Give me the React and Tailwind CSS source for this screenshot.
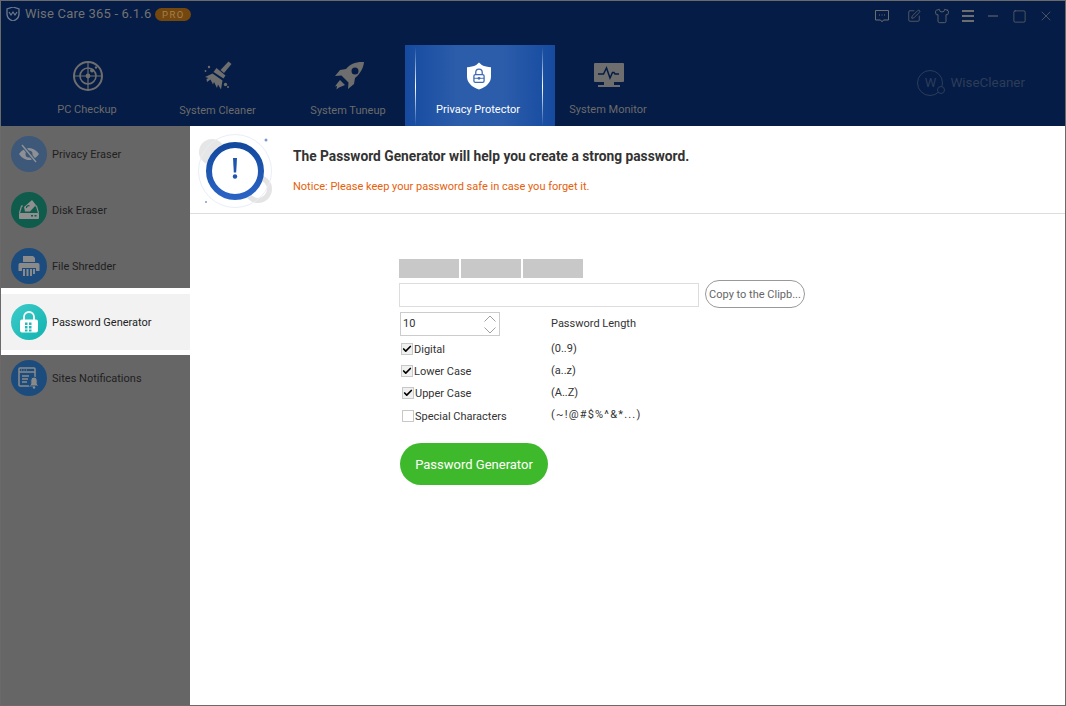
import { SquarePen, Shirt, Minus, Square, X, Check } from 'lucide-react';

const font = "font-['Roboto','Liberation_Sans',sans-serif]";

function RadarIcon() {
  return (
    <svg width="32" height="32" viewBox="0 0 32 32" fill="none" stroke="#6e6e6e">
      <circle cx="16" cy="16" r="14" strokeWidth="2" />
      <circle cx="16" cy="16" r="8" strokeWidth="1.6" />
      <path d="M16 2v28M2 16h28" strokeWidth="1.2" />
      <circle cx="16" cy="16" r="2.4" fill="#6e6e6e" stroke="none" />
      <circle cx="20" cy="10.5" r="2" fill="#6e6e6e" stroke="none" />
      <circle cx="24" cy="7.5" r="1.2" fill="#6e6e6e" stroke="none" />
    </svg>
  );
}

function BroomIcon() {
  return (
    <svg width="32" height="32" viewBox="0 0 32 32" fill="#6e6e6e">
      <path d="M26.5 1.5l3 2.5-7.5 9-3.5-3z" />
      <path d="M14.5 8l9 7.500-2 3-10-6.500z" />
      <path d="M10.500 13.500l10 7-1.500 9-3-5-1 3.500-3-6-1 2.500-2.500-5-3.500 2.500-.5-3 2-1-3.500-1z" />
      <circle cx="23.500" cy="24.500" r="1.700" />
      <circle cx="26" cy="27" r="1" />
      <circle cx="7" cy="7" r="1.200" />
      <circle cx="3.500" cy="11" r="0.900" />
    </svg>
  );
}

function RocketIcon() {
  return (
    <svg width="32" height="32" viewBox="0 0 32 32">
      <path fill="#6e6e6e" fillRule="evenodd" d="M30 2c-8-.500-14 2-18 7l-6 1-5 6 6.500-.500 3.500 3.500 3.500 3.500-.5 6.500 6-5 1-6c5-4 8.500-10 9-16zM21 7.500a3.500 3.500 0 1 1 0 7 3.500 3.500 0 0 1 0-7z" />
      <path fill="#6e6e6e" d="M6 20l5 5-6 2.500-2.500 2 .5-3.500-2 .5 2.500-3.500z" />
    </svg>
  );
}

function ShieldIcon() {
  return (
    <svg width="24" height="28" viewBox="0 0 26 29">
      <path fill="#fff" d="M13 0l3 2.500c3 1.500 6.500 2.300 10 2.500v10c0 6.500-5 11.500-13 14C5 26.500 0 21.500 0 15V5c3.500-.2 7-1 10-2.500z" />
      <rect x="7.500" y="13" width="11" height="8.500" rx="1.500" fill="none" stroke="#3f6ab5" strokeWidth="1.400" />
      <path d="M9.500 13v-2.500a3.500 3.500 0 0 1 7 0V13" fill="none" stroke="#3f6ab5" strokeWidth="1.400" />
      <path d="M7.500 17h11" stroke="#3f6ab5" strokeWidth="1" />
      <circle cx="13" cy="17" r="1.500" fill="#3f6ab5" />
    </svg>
  );
}

function MonitorIcon() {
  return (
    <svg width="30" height="26" viewBox="0 0 30 26">
      <rect x="0" y="0" width="30" height="19" rx="1" fill="#6e6e6e" />
      <rect x="10" y="19" width="10" height="3" fill="#6e6e6e" />
      <rect x="4" y="22" width="22" height="2" fill="#6e6e6e" />
      <path d="M4 11h5.500l3-6 3.500 10 2.500-5.500h1.500l1 1.500h4" fill="none" stroke="#051c46" strokeWidth="1.500" />
    </svg>
  );
}

function NavItem({ icon, label, className, iconClass, textClass }) {
  return (
    <div className={`flex flex-col items-center h-[81px] ${className}`}>
      <div className={`h-[32px] mt-[15px] flex items-center justify-center ${iconClass || ''}`}>{icon}</div>
      <span className={`mt-[10px] leading-[16px] text-[#6b6b6b] ${textClass || ''}`}>{label}</span>
    </div>
  );
}

function EyeOff() {
  return (
    <svg width="22" height="20" viewBox="0 0 22 20">
      <path fill="#8d9095" fillRule="evenodd" d="M11 4c4 0 7.500 2.500 10 6-2.500 3.500-6 6-10 6S3.500 13.500 1 10c2.500-3.500 6-6 10-6zM11 6.500a3.500 3.500 0 1 0 0 7 3.500 3.500 0 0 0 0-7z" />
      <path d="M4 1l14 17" stroke="#3d5878" strokeWidth="3.500" />
      <path d="M4 1l14 17" stroke="#8d9095" strokeWidth="1.500" />
    </svg>
  );
}

function DiskIcon() {
  return (
    <svg width="22" height="22" viewBox="0 0 22 22">
      <path fill="none" stroke="#8f8f8f" strokeWidth="1.200" d="M5 7H3.500L1.500 14M17 7h1.500l2 7" />
      <rect x="1" y="14" width="20" height="6" rx="1" fill="#8f8f8f" />
      <rect x="13" y="16" width="2" height="1.500" fill="#0f5c4c" />
      <rect x="16.500" y="16" width="2" height="1.500" fill="#0f5c4c" />
      <path d="M6 8l8-7 4 5-6 6.500H7z" fill="#8f8f8f" />
      <path d="M8.500 9a2 2 0 0 1 3-2" fill="none" stroke="#0f5c4c" strokeWidth="1.200" />
    </svg>
  );
}

function PrinterIcon() {
  return (
    <svg width="22" height="22" viewBox="0 0 22 22" fill="#8a8a8a">
      <path d="M5 1h10l2 2v4H5z" />
      <path d="M2 8h18a1.500 1.500 0 0 1 1.500 1.500V16H18v-3H4v3H.5V9.500A1.500 1.500 0 0 1 2 8z" />
      <rect x="5" y="14" width="2" height="7" />
      <rect x="8.500" y="14" width="2" height="7" />
      <rect x="12" y="14" width="2" height="7" />
      <rect x="15" y="14" width="2" height="5" />
    </svg>
  );
}

function LockIcon() {
  return (
    <svg width="20" height="22" viewBox="0 0 20 22">
      <path d="M5 9V6a5 5 0 0 1 10 0v3" fill="none" stroke="#fff" strokeWidth="1.800" />
      <rect x="1" y="8.500" width="18" height="13" rx="2" fill="#fff" />
      <g fill="#1fb9b7">
        <rect x="6" y="11.500" width="2.500" height="2.500" />
        <rect x="10" y="11.500" width="2.500" height="2.500" />
        <rect x="6" y="15" width="2.500" height="2.500" />
        <rect x="10" y="15" width="2.500" height="2.500" />
        <rect x="6" y="18.500" width="2.500" height="2" />
        <rect x="10" y="18.500" width="2.500" height="2" />
      </g>
    </svg>
  );
}

function SiteIcon() {
  return (
    <svg width="22" height="22" viewBox="0 0 22 22">
      <rect x="1" y="1" width="16" height="18" rx="1" fill="none" stroke="#8a8a8a" strokeWidth="1.500" />
      <path d="M1 5h16" stroke="#8a8a8a" strokeWidth="1.500" />
      <path d="M3 3h1M5.500 3h1M8 3h1" stroke="#8a8a8a" />
      <path d="M4 9h7M4 12h6M4 15h5" stroke="#8a8a8a" strokeWidth="1.300" />
      <path d="M16 10a3.200 3.200 0 0 1 3.200 3.200V17l1.800 2H11l1.800-2v-3.800A3.200 3.200 0 0 1 16 10z" fill="#8a8a8a" stroke="#1c4c7e" />
      <circle cx="16" cy="20.500" r="1.200" fill="#8a8a8a" />
    </svg>
  );
}

function SideItem({ icon, label, circle, active }) {
  return (
    <div className={`flex items-center pl-[10px] ${active ? 'relative h-[67px] -mt-[6px] -mb-[5px] border-t-[6px] border-b-[5px] border-white bg-[#f2f2f2] text-[#222222]' : 'h-[56px] text-[#1f1f1f]'}`}>
      <div className={`w-[36px] h-[36px] rounded-full flex items-center justify-center ${circle}`}>{icon}</div>
      <span className="ml-[5px] mt-[3px]">{label}</span>
    </div>
  );
}

function NoticeArt() {
  return (
    <svg width="80" height="80" viewBox="0 0 80 80">
      <defs>
        <linearGradient id="ring" x1="0" y1="0" x2="0" y2="1">
          <stop offset="0" stopColor="#134a9e" />
          <stop offset="1" stopColor="#2a63c4" />
        </linearGradient>
      </defs>
      <circle cx="16" cy="22" r="13" fill="#e6e6e6" />
      <circle cx="62" cy="59" r="11.500" fill="#fff" stroke="#e4e4e4" strokeWidth="5" />
      <circle cx="39" cy="41" r="36.500" fill="none" stroke="#e8eef8" />
      <circle cx="39" cy="41" r="26" fill="#fff" stroke="url(#ring)" strokeWidth="6" />
      <path d="M37 28h4l-.8 14.500h-2.400z" fill="#1f55ac" />
      <circle cx="39" cy="46.500" r="2.200" fill="#1f55ac" />
      <circle cx="70" cy="10" r="1.500" fill="#7d9ad0" />
      <circle cx="10" cy="72" r="1" fill="#7d9ad0" />
    </svg>
  );
}

function CheckBox({ checked }) {
  return (
    <span className={`w-[12px] h-[12px] border border-[#c8c8c8] flex items-center justify-center shrink-0 ${checked ? 'bg-[#f0f0f0]' : 'bg-white'}`}>
      {checked && <Check size={12} strokeWidth={4} className="text-black" />}
    </span>
  );
}

function OptionRow({ label, range, checked, className, boxClass, rangeClass }) {
  return (
    <div className={`grid grid-cols-[152px_1fr] items-center h-[22px] ${className || ''}`}>
      <div className={`flex items-center ${boxClass || 'pl-[2px]'}`}>
        <CheckBox checked={checked} />
        <span className="ml-px mt-[3px] text-[#333333]">{label}</span>
      </div>
      <span className={`text-[#333333] ${rangeClass || ''}`}>{range}</span>
    </div>
  );
}

export default function App() {
  return (
    <div className={`${font} w-[1066px] h-[706px] flex flex-col overflow-hidden border border-[#6a6a6a] bg-white text-[11px]`}>
      <header className="h-[125px] bg-[#051c46] shrink-0 flex flex-col">
        <div className="h-[44px] flex items-start">
          <div className="flex items-center h-[26px] pl-[5px]">
            <svg width="14" height="14" viewBox="0 0 14 14">
              <path d="M7 0l6 2v5c0 3.500-3 6-6 7-3-1-6-3.500-6-7V2z" fill="none" stroke="#6d7a8c" strokeWidth="1.300" />
              <path d="M3 5l2 3 2-3 2 3 2-3" fill="none" stroke="#6d7a8c" strokeWidth="1.200" />
            </svg>
            <span className="ml-[5px] text-[13px] tracking-[0.2px] text-[#727272]">Wise Care 365 - 6.1.6</span>
            <span className="ml-[4px] h-[13px] w-[36px] rounded-full bg-[#74470f] text-[#a3804d] text-[9.500px] leading-[13px] tracking-[1.500px] text-center">PRO</span>
          </div>
          <div className="ml-auto flex items-center h-[30px] text-[#6e6e6e]">
            <svg width="14" height="14" viewBox="0 0 14 14" fill="none" stroke="currentColor">
              <path d="M.5 1.500h13v9.500H8.500L7 12.800 5.500 11H.5z" />
              <path d="M4 6h1M6.500 6h1M9 6h1" />
            </svg>
            <SquarePen size={14} strokeWidth={1.200} className="ml-[18px]" />
            <Shirt size={16} strokeWidth={1.200} className="ml-[13px]" />
            <svg width="12" height="12" viewBox="0 0 12 12" fill="currentColor" className="ml-[12px]">
              <rect y="0" width="12" height="2" />
              <rect y="5" width="12" height="2" />
              <rect y="10" width="12" height="2" />
            </svg>
            <Minus size={16} strokeWidth={1.500} className="ml-[11px]" />
            <Square size={15} strokeWidth={1.100} className="ml-[11px]" />
            <X size={16} strokeWidth={1} className="ml-[11px] mr-[11px]" />
          </div>
        </div>
        <div className="flex-1 flex pl-[21px] relative">
          <NavItem icon={<RadarIcon />} label="PC Checkup" className="w-[130px]" iconClass="ml-[2px]" />
          <NavItem icon={<BroomIcon />} label="System Cleaner" className="w-[131px]" textClass="mt-[11px]" />
          <NavItem icon={<RocketIcon />} label="System Tuneup" className="w-[130px] -mr-[8px]" iconClass="ml-[3px]" textClass="mt-[11px]" />
          <div className="relative w-[150px] h-[81px] bg-[linear-gradient(90deg,#154a9f_0%,#2c5dab_35%,#2c5dab_65%,#154a9f_100%)] flex flex-col items-center pr-[2px]">
            <div className="absolute left-[10px] top-[2px] bottom-0 w-px bg-[linear-gradient(180deg,transparent,#ffffff,transparent)]" />
            <div className="absolute right-[12px] top-[2px] bottom-0 w-px bg-[linear-gradient(180deg,transparent,#ffffff,transparent)]" />
            <div className="mt-[17px] h-[28px]"><ShieldIcon /></div>
            <span className="mt-[12px] pr-[2px] leading-[16px] text-white">Privacy Protector</span>
          </div>
          <NavItem icon={<MonitorIcon />} label="System Monitor" className="w-[106px]" iconClass="ml-[2px]" />
          <div className="ml-auto mr-[40px] mt-[25px] h-[26px] flex items-center text-[#2d3d58]">
            <div className="relative w-[26px] h-[26px] rounded-full border border-[#2d3d58] flex items-center justify-center text-[13px]">
              W
              <span className="absolute right-[-3px] bottom-[1px] w-[8px] h-[8px] rounded-full border border-[#2d3d58] bg-[#051c46]" />
            </div>
            <span className="ml-[7px] text-[13.400px]">WiseCleaner</span>
          </div>
        </div>
      </header>
      <div className="flex flex-1 min-h-0">
        <aside className="w-[189px] shrink-0 bg-[#666666]">
          <SideItem label="Privacy Eraser" circle="bg-[#3d5878]" icon={<EyeOff />} />
          <SideItem label="Disk Eraser" circle="bg-[#0f5c4c]" icon={<DiskIcon />} />
          <SideItem label="File Shredder" circle="bg-[#1c4c7e]" icon={<PrinterIcon />} />
          <SideItem label="Password Generator" active circle="bg-[linear-gradient(135deg,#3dcbc9,#10b3b0)]" icon={<LockIcon />} />
          <SideItem label="Sites Notifications" circle="bg-[#1c4c7e]" icon={<SiteIcon />} />
        </aside>
        <main className="flex-1 min-w-0 flex flex-col">
          <div className="h-[88px] shrink-0 border-b border-[#dddddd] flex items-start">
            <div className="ml-[6px] mt-[4px] shrink-0"><NoticeArt /></div>
            <div className="ml-[17px] pt-[21px]">
              <div className="text-[13.750px] leading-[18px] font-bold text-[#333333]">The Password Generator will help you create a strong password.</div>
              <div className="mt-[14px] leading-[16px] text-[#e6600a]">Notice: Please keep your password safe in case you forget it.</div>
            </div>
          </div>
          <div className="pl-[209px] pt-[45px]">
            <div className="flex gap-[2px] h-[19px]">
              <div className="w-[60px] bg-[#c8c8c8]" />
              <div className="w-[60px] bg-[#c8c8c8]" />
              <div className="w-[60px] bg-[#c8c8c8]" />
            </div>
            <div className="flex items-start mt-[2px]">
              <div className="mt-[3px] w-[300px] h-[24px] border border-[#dddddd]" />
              <div className="ml-[6px] w-[100px] h-[28px] pt-[3px] rounded-full border border-[#999999] text-[#666666] flex items-center justify-center whitespace-nowrap">Copy to the Clipb...</div>
            </div>
            <div className="grid grid-cols-[152px_1fr] items-center mt-[4px]">
              <div className="ml-px w-[100px] h-[24px] border border-[#cccccc] flex items-center justify-between pl-[2px] pr-[3px] text-[#333333]">
                <span className="mt-px">10</span>
                <span className="flex flex-col gap-[5px]">
                  <svg width="12" height="7" viewBox="0 0 12 7" fill="none" stroke="#a0a0a0"><path d="M.5 6.500L6 1l5.500 5.500" /></svg>
                  <svg width="12" height="7" viewBox="0 0 12 7" fill="none" stroke="#a0a0a0"><path d="M.5.500L6 6l5.500-5.500" /></svg>
                </span>
              </div>
              <span className="text-[#333333] mt-px">Password Length</span>
            </div>
            <div className="mt-[2px]">
              <OptionRow label="Digital" range="(0..9)" checked />
              <OptionRow label="Lower Case" range="(a..z)" checked />
              <OptionRow label="Upper Case" range="(A..Z)" checked boxClass="pl-[3px]" />
              <OptionRow label="Special Characters" range="(~!@#$%^&*...)" className="h-[23px]" boxClass="pl-[3px]" rangeClass="tracking-[1.200px]" />
            </div>
            <button className="mt-[16px] ml-px w-[148px] h-[42px] pt-[2px] rounded-full bg-[#3fb92c] text-white text-[13px]">Password Generator</button>
          </div>
        </main>
      </div>
    </div>
  );
}
